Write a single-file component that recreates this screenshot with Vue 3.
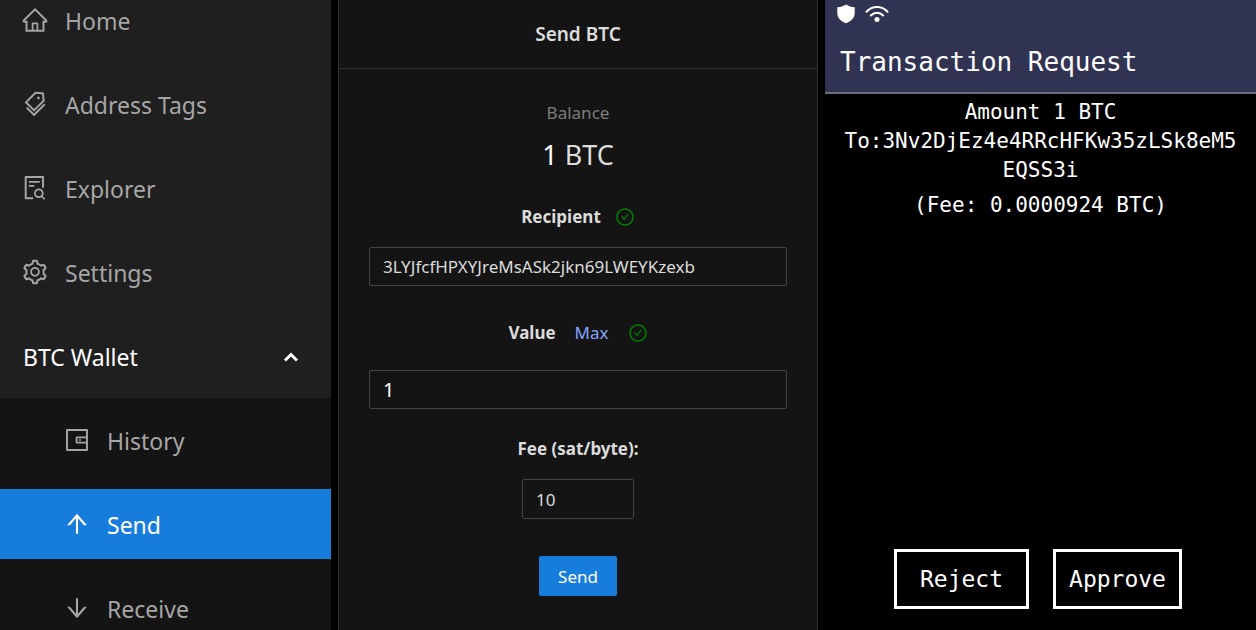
<script setup>
import { ref } from 'vue'

const recipient = ref('3LYJfcfHPXYJreMsASk2jkn69LWEYKzexb')
const amount = ref('1')
const fee = ref('10')

const icons = {
  home: 'M946.5 505L560.1 118.8l-25.9-25.9a31.5 31.5 0 00-44.4 0L77.5 505a63.9 63.9 0 00-18.8 46c.4 35.2 29.7 63.3 64.9 63.3h42.5V940h691.8V614.3h43.4c17.1 0 33.2-6.7 45.3-18.8a63.6 63.6 0 0018.7-45.3c0-17-6.7-33.1-18.8-45.2zM568 868H456V664h112v204zm217.9-325.7V868H632V640c0-22.1-17.9-40-40-40H432c-22.1 0-40 17.9-40 40v228H238.1V542.3h-96l370-369.7 23.1 23.1L882 542.3h-96.1z',
  tags: 'M483.2 790.3L861.4 412c1.7-1.7 2.5-4 2.3-6.3l-25.5-301.4c-.7-7.8-6.8-13.9-14.6-14.6L522.2 64.3c-2.3-.2-4.7.6-6.3 2.3L137.7 444.8a8.03 8.03 0 000 11.3l334.2 334.2c3.1 3.2 8.2 3.2 11.3 0zm62.6-651.7l224.6 19 19 224.6L477.5 694 233.9 450.5l311.9-311.9zm60.16 186.23a48 48 0 1067.88-67.89 48 48 0 10-67.88 67.89zM889.7 539.8l-39.6-39.5a8.03 8.03 0 00-11.3 0l-362 361.3-237.6-237a8.03 8.03 0 00-11.3 0l-39.6 39.5a8.03 8.03 0 000 11.3l243.2 242.8 39.6 39.5c3.1 3.1 8.2 3.1 11.3 0l407.3-406.6c3.1-3.1 3.1-8.2 0-11.3z',
  explorer: 'M688 312v-48c0-4.4-3.6-8-8-8H296c-4.4 0-8 3.6-8 8v48c0 4.4 3.6 8 8 8h384c4.4 0 8-3.6 8-8zm-392 88c-4.4 0-8 3.6-8 8v48c0 4.4 3.6 8 8 8h184c4.4 0 8-3.6 8-8v-48c0-4.4-3.6-8-8-8H296zm144 452H208V148h560v344c0 4.4 3.6 8 8 8h56c4.4 0 8-3.6 8-8V108c0-17.7-14.3-32-32-32H168c-17.7 0-32 14.3-32 32v784c0 17.7 14.3 32 32 32h272c4.4 0 8-3.6 8-8v-56c0-4.4-3.6-8-8-8zm445.7 51.5l-93.3-93.3C814.7 780.7 828 743.9 828 704c0-97.2-78.8-176-176-176s-176 78.8-176 176 78.8 176 176 176c35.8 0 69-10.7 96.8-29l94.7 94.7c1.6 1.6 3.6 2.3 5.6 2.3s4.1-.8 5.6-2.3l31-31a7.9 7.9 0 000-11.2zM652 816c-61.9 0-112-50.1-112-112s50.1-112 112-112 112 50.1 112 112-50.1 112-112 112z',
  settings: 'M924.8 625.7l-65.5-56c3.1-19 4.7-38.4 4.7-57.8s-1.6-38.8-4.7-57.8l65.5-56a32.03 32.03 0 009.3-35.2l-.9-2.6a443.74 443.74 0 00-79.7-137.9l-1.8-2.1a32.12 32.12 0 00-35.1-9.5l-81.3 28.9c-30-24.6-63.5-44-99.7-57.6l-15.7-85a32.05 32.05 0 00-25.8-25.7l-2.7-.5c-52.1-9.4-106.9-9.4-159 0l-2.7.5a32.05 32.05 0 00-25.8 25.7l-15.8 85.4a351.86 351.86 0 00-99 57.4l-81.9-29.1a32 32 0 00-35.1 9.5l-1.8 2.1a446.02 446.02 0 00-79.7 137.9l-.9 2.6c-4.5 12.5-.8 26.5 9.3 35.2l66.3 56.6c-3.1 18.8-4.6 38-4.6 57.1 0 19.2 1.5 38.4 4.6 57.1L99 625.5a32.03 32.03 0 00-9.3 35.2l.9 2.6c18.1 50.4 44.9 96.9 79.7 137.9l1.8 2.1a32.12 32.12 0 0035.1 9.5l81.9-29.1c29.8 24.5 63.1 43.9 99 57.4l15.8 85.4a32.05 32.05 0 0025.8 25.7l2.7.5a449.4 449.4 0 00159 0l2.7-.5a32.05 32.05 0 0025.8-25.7l15.7-85a350 350 0 0099.7-57.6l81.3 28.9a32 32 0 0035.1-9.5l1.8-2.1c34.8-41.1 61.6-87.5 79.7-137.9l.9-2.6c4.5-12.3.8-26.3-9.3-35zM788.3 465.9c2.5 15.1 3.8 30.6 3.8 46.1s-1.3 31-3.8 46.1l-6.6 40.1 74.7 63.9a370.03 370.03 0 01-42.6 73.6L721 702.8l-31.4 25.8c-23.9 19.6-50.5 35-79.3 45.8l-38.1 14.3-17.9 97a377.5 377.5 0 01-85 0l-17.9-97.2-37.8-14.5c-28.5-10.8-55-26.2-78.7-45.7l-31.4-25.9-93.4 33.2c-17-22.9-31.2-47.6-42.6-73.6l75.5-64.5-6.5-40c-2.4-14.9-3.7-30.3-3.7-45.5 0-15.3 1.2-30.6 3.7-45.5l6.5-40-75.5-64.5c11.3-26.1 25.6-50.7 42.6-73.6l93.4 33.2 31.4-25.9c23.7-19.5 50.2-34.9 78.7-45.7l37.9-14.3 17.9-97.2c28.1-3.2 56.8-3.2 85 0l17.9 97 38.1 14.3c28.7 10.8 55.4 26.2 79.3 45.8l31.4 25.8 92.8-32.9c17 22.9 31.2 47.6 42.6 73.6L781.8 426l6.5 39.9zM512 326c-97.2 0-176 78.8-176 176s78.8 176 176 176 176-78.8 176-176-78.8-176-176-176zm79.2 255.2A111.6 111.6 0 01512 614c-29.9 0-58-11.7-79.2-32.8A111.6 111.6 0 01400 502c0-29.9 11.7-58 32.8-79.2C454 401.6 482.1 390 512 390c29.9 0 58 11.6 79.2 32.8A111.6 111.6 0 01624 502c0 29.9-11.7 58-32.8 79.2z',
  history: 'M880 112H144c-17.7 0-32 14.3-32 32v736c0 17.7 14.3 32 32 32h736c17.7 0 32-14.3 32-32V144c0-17.7-14.3-32-32-32zm-40 464H528V448h312v128zm0 264H184V184h656v200H496c-17.7 0-32 14.3-32 32v192c0 17.7 14.3 32 32 32h344v200zM580 512a40 40 0 1080 0 40 40 0 10-80 0z',
  send: 'M868 545.5L536.1 163a31.96 31.96 0 00-48.3 0L156 545.5a7.97 7.97 0 006 13.2h81c4.6 0 9-2 12.1-5.5L474 300.9V864c0 4.4 3.6 8 8 8h60c4.4 0 8-3.6 8-8V300.9l218.9 252.3c3 3.5 7.4 5.5 12.1 5.5h81c6.8 0 10.5-8 6-13.2z',
  receive: 'M862 465.3h-81c-4.6 0-9 2-12.1 5.5L550 723.1V160c0-4.4-3.6-8-8-8h-60c-4.4 0-8 3.6-8 8v563.1L255.1 470.8c-3-3.5-7.4-5.5-12.1-5.5h-81c-6.8 0-10.5 8.1-6 13.2L487.9 861a31.96 31.96 0 0048.3 0L868 478.5c4.5-5.2.8-13.2-6-13.2z',
  check: 'M699 353h-46.9c-10.2 0-19.9 4.9-25.9 13.3L469 584.3l-71.2-98.8c-6-8.3-15.6-13.3-25.9-13.3H325c-6.5 0-10.3 7.4-6.5 12.7l124.6 172.8a31.8 31.8 0 0051.7 0l210.6-292c3.9-5.3.1-12.7-6.4-12.7zM512 64C264.6 64 64 264.6 64 512s200.6 448 448 448 448-200.6 448-448S759.4 64 512 64zm0 820c-205.4 0-372-166.6-372-372s166.6-372 372-372 372 166.6 372 372-166.6 372-372 372z',
}

const mainLinks = [
  { label: 'Home', icon: 'home' },
  { label: 'Address Tags', icon: 'tags' },
  { label: 'Explorer', icon: 'explorer' },
  { label: 'Settings', icon: 'settings' },
]

const walletLinks = [
  { label: 'History', icon: 'history' },
  { label: 'Send', icon: 'send', active: true },
  { label: 'Receive', icon: 'receive' },
]
</script>

<template>
  <div class="page">
    <nav class="sidebar">
      <div class="menu">
        <a v-for="link in mainLinks" :key="link.label" class="item" href="#">
          <svg class="icon" viewBox="0 0 1024 1024"><path :d="icons[link.icon]" /></svg>
          <span>{{ link.label }}</span>
        </a>
        <button class="item group" type="button" aria-expanded="true">
          <span>BTC Wallet</span>
          <svg class="chevron" viewBox="0 0 16 12"><path d="M2 9.500L8 3.500L14 9.500" /></svg>
        </button>
      </div>
      <div class="submenu">
        <a
          v-for="link in walletLinks"
          :key="link.label"
          class="item sub"
          :class="{ active: link.active }"
          href="#"
        >
          <svg class="icon" viewBox="0 0 1024 1024"><path :d="icons[link.icon]" /></svg>
          <span>{{ link.label }}</span>
        </a>
      </div>
    </nav>

    <main class="card">
      <h1 class="card-title">Send BTC</h1>
      <form class="form" @submit.prevent>
        <div class="caption">Balance</div>
        <div class="balance"><span class="number">1</span> BTC</div>

        <div class="row recipient-row">
          <label for="recipient">Recipient</label>
          <svg class="check" viewBox="0 0 1024 1024"><path :d="icons.check" /></svg>
        </div>
        <input id="recipient" v-model="recipient" class="field" type="text" />

        <div class="row value-row">
          <label for="amount">Value</label>
          <a class="max" href="#">Max</a>
          <svg class="check" viewBox="0 0 1024 1024"><path :d="icons.check" /></svg>
        </div>
        <input id="amount" v-model="amount" class="field amount" type="text" />

        <div class="row fee-row"><label for="fee">Fee (sat/byte):</label></div>
        <input id="fee" v-model="fee" class="field fee" type="text" />

        <button class="submit" type="submit">Send</button>
      </form>
    </main>

    <section class="device">
      <header class="device-head">
        <div class="status">
          <svg class="shield" viewBox="0 0 18 20">
            <path d="M9 0.500C11.500 2.200 14.500 3 17.700 3.200V9C17.700 13.800 14 17.500 9 19.300C4 17.500 0.300 13.800 0.300 9V3.200C3.500 3 6.500 2.200 9 0.500Z" />
          </svg>
          <svg class="wifi" viewBox="0 0 24 18">
            <path d="M1.500 6.800C7.500 0.500 16.500 0.500 22.500 6.800" />
            <path d="M5.800 10.500C9.300 6.700 14.700 6.700 18.200 10.500" />
            <circle cx="12" cy="14.500" r="2.500" />
          </svg>
        </div>
        <h2 class="device-title">Transaction Request</h2>
      </header>
      <div class="details">
        <p>Amount 1 BTC</p>
        <p class="address">To:3Nv2DjEz4e4RRcHFKw35zLSk8eM5EQSS3i</p>
        <p class="fee-line">(Fee: 0.0000924 BTC)</p>
      </div>
      <div class="actions">
        <button class="choice reject" type="button">Reject</button>
        <button class="choice approve" type="button">Approve</button>
      </div>
    </section>
  </div>
</template>

<style>
body {
  background: #000;
}
</style>

<style scoped>
* {
  box-sizing: border-box;
}

.page {
  display: grid;
  grid-template-columns: 331fr 480fr 431fr;
  column-gap: 7px;
  height: 100vh;
  overflow: hidden;
  background: #000;
  color: #dcdcdc;
  font-family: "Noto Sans", "Open Sans", sans-serif;
  font-size: 17px;
}

a {
  text-decoration: none;
}

button,
input {
  font-family: inherit;
}

/* Sidebar */
.sidebar {
  min-width: 0;
  overflow: hidden;
  background: #141414;
}

.menu,
.submenu {
  display: flex;
  flex-direction: column;
  gap: 14px;
}

.menu {
  margin-top: -14px;
  padding-bottom: 6px;
  background: #1f1f1f;
}

.submenu {
  padding-top: 7px;
}

.item {
  display: flex;
  flex: none;
  align-items: center;
  gap: 16px;
  height: 70px;
  padding: 0 32px 0 21px;
  color: #a6a6a6;
  font-size: 23px;
  line-height: 32px;
}

.item.sub {
  padding-top: 2px;
  padding-left: 63px;
}

.item.active {
  background: #177ddc;
  color: #fff;
}

.item.group {
  justify-content: space-between;
  padding-left: 23px;
  border: 0;
  background: none;
  color: #fff;
}

.icon {
  flex: none;
  width: 28px;
  height: 28px;
  margin-bottom: 2px;
  fill: currentColor;
}

.chevron {
  width: 16px;
  height: 12px;
  fill: none;
  stroke: currentColor;
  stroke-width: 3;
}

/* Send form */
.card {
  min-width: 0;
  border: 1px solid #303030;
  border-width: 0 1px;
  background: #141414;
}

.card-title {
  margin: 0;
  border-bottom: 1px solid #303030;
  font-size: 19px;
  font-weight: 600;
  line-height: 68px;
  text-align: center;
}

.form {
  display: flex;
  flex-direction: column;
  align-items: center;
  padding: 30px 30px 0;
}

.caption {
  color: #7d7d7d;
  line-height: 28px;
}

.balance {
  margin-top: 8px;
  font-size: 27px;
  line-height: 40px;
}

.number {
  color: #fff;
}

.row {
  display: flex;
  align-items: center;
  height: 28px;
  font-weight: 700;
  line-height: 28px;
}

.recipient-row {
  gap: 14px;
  margin: 28px 0 16px;
}

.value-row {
  gap: 19px;
  margin: 33px 0 23px;
}

.fee-row {
  margin: 26px 0 16px;
}

.max {
  color: #85a5ff;
  font-weight: 400;
}

.check {
  width: 20px;
  height: 20px;
  fill: #008000;
}

.field {
  width: 100%;
  height: 39px;
  padding: 0 13px;
  border: 1px solid #434343;
  border-radius: 2px;
  outline: none;
  background: transparent;
  color: #dcdcdc;
  font-size: 17px;
}

.field.amount {
  color: #fff;
  font-size: 20px;
}

.field.fee {
  width: 112px;
  height: 40px;
}

.submit {
  width: 78px;
  height: 40px;
  margin-top: 37px;
  padding: 0;
  border: 0;
  border-radius: 2px;
  background: #177ddc;
  color: #fff;
  font-size: 17px;
}

/* Hardware wallet screen */
.device {
  display: flex;
  flex-direction: column;
  min-width: 0;
  background: #000;
  color: #fff;
  font-family: "DejaVu Sans Mono", "Liberation Mono", monospace;
}

.device-head {
  padding: 4px 15px 13px;
  border-bottom: 2px solid #6c6e7c;
  background: #303352;
}

.status {
  display: flex;
  align-items: center;
  gap: 10px;
  margin-left: -3px;
}

.shield {
  width: 18px;
  height: 20px;
  fill: currentColor;
}

.wifi {
  width: 24px;
  height: 18px;
  fill: none;
  stroke: currentColor;
  stroke-width: 2;
  stroke-linecap: round;
}

.wifi circle {
  fill: currentColor;
  stroke: none;
}

.device-title {
  margin: 21px 0 0;
  font-size: 26px;
  font-weight: 400;
  line-height: 34px;
}

.details {
  padding: 4px 15px 0;
  font-size: 21px;
  line-height: 29px;
  text-align: center;
}

.details p {
  margin: 0;
}

.address {
  overflow-wrap: anywhere;
}

.details .fee-line {
  margin-top: 6px;
}

.actions {
  display: flex;
  justify-content: center;
  gap: 24px;
  margin-top: auto;
  padding: 0 5px 21px 0;
}

.choice {
  height: 60px;
  padding: 0;
  border: 3px solid #fff;
  background: none;
  color: #fff;
  font-size: 23px;
}

.reject {
  width: 135px;
}

.approve {
  width: 129px;
}
</style>
